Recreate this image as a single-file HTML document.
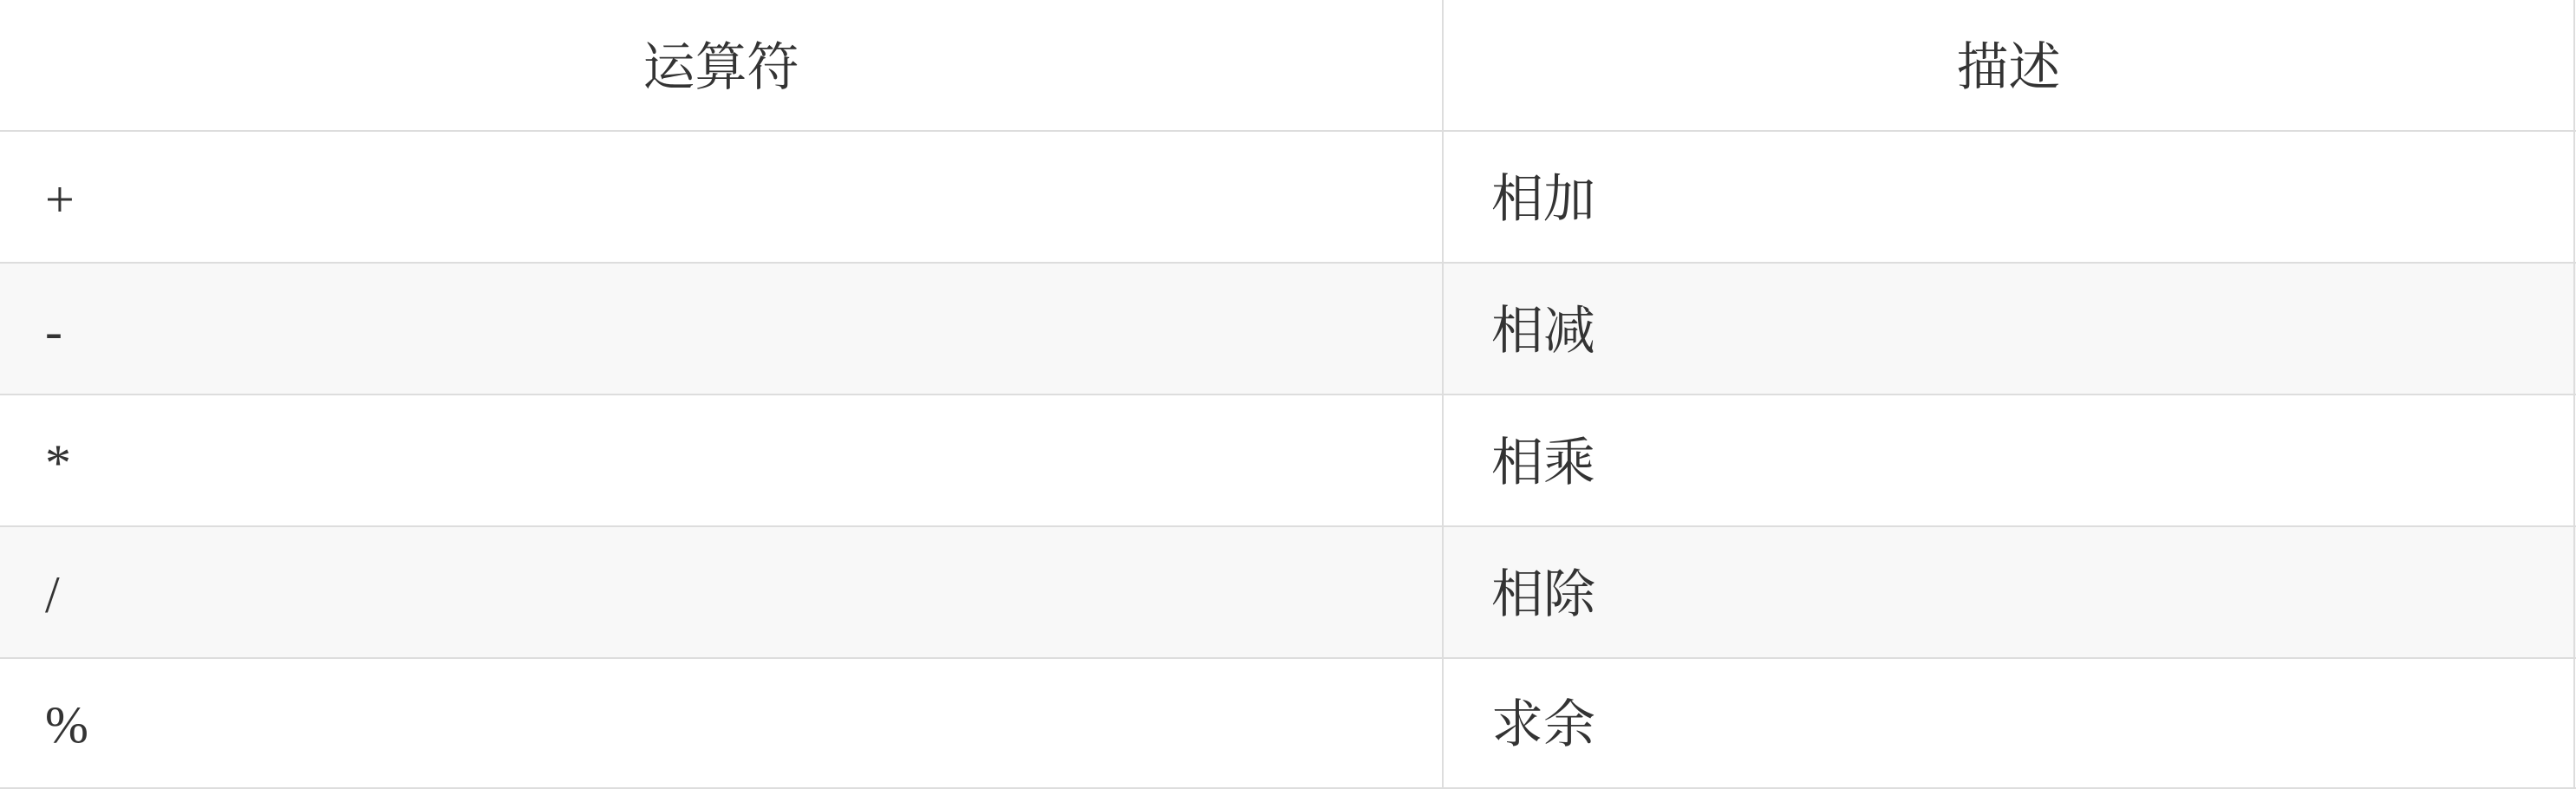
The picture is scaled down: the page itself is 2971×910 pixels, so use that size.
<!DOCTYPE html>
<html><head><meta charset="utf-8"><style>
html,body{margin:0;padding:0;background:#fff;width:2971px;height:910px;overflow:hidden}
body{position:relative;font-family:"Liberation Serif","Noto Serif CJK SC",serif;color:#333;font-size:60px}
.row{position:absolute;left:0;width:2971px;height:150px;border-bottom:2px solid #ddd}
.alt{background:#f8f8f8}
.c1,.c2{position:absolute;top:0;height:150px;line-height:156px;white-space:nowrap}
.c1{left:0;width:1663px;padding-left:52px;box-sizing:border-box}
.c2{left:1663px;width:1307px;padding-left:55px;box-sizing:border-box;border-left:2px solid #ddd;border-right:2px solid #ddd;height:150px}
.h .c1,.h .c2{text-align:center;padding-left:0}
</style></head><body>
<div class="row h" style="top:0"><div class="c1">运算符</div><div class="c2">描述</div></div>
<div class="row" style="top:152px"><div class="c1">+</div><div class="c2">相加</div></div>
<div class="row alt" style="top:304px"><div class="c1">-</div><div class="c2">相减</div></div>
<div class="row" style="top:456px"><div class="c1">*</div><div class="c2">相乘</div></div>
<div class="row alt" style="top:608px"><div class="c1">/</div><div class="c2">相除</div></div>
<div class="row" style="top:758px"><div class="c1">%</div><div class="c2">求余</div></div>
</body></html>
